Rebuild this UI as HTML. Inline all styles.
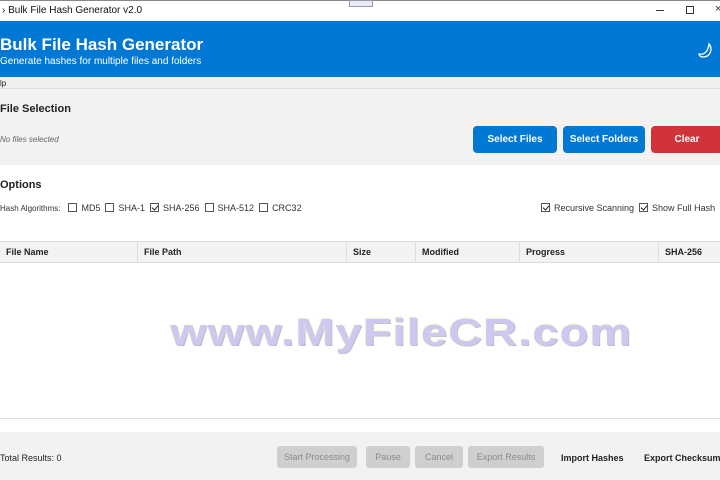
<!DOCTYPE html>
<html><head><style>
*{margin:0;padding:0;box-sizing:border-box}
body{width:720px;height:480px;overflow:hidden;position:relative;background:#fff;font-family:"Liberation Sans","DejaVu Sans",sans-serif;color:#222}
.a{position:absolute;white-space:nowrap}
.btn{position:absolute;border-radius:4px;color:#fff;font-size:10px;font-weight:bold;display:flex;align-items:center;justify-content:center}
.fb{position:absolute;top:446px;height:22px;border-radius:3px;background:#cfcfcf;color:#8a8a8a;font-size:9px;display:flex;align-items:center;justify-content:center;white-space:nowrap}
.cb{display:inline-block;width:9px;height:9px;border:1px solid #555;vertical-align:-1px;margin-right:4px;position:relative;background:#fff}
.cb.k::after{content:"";position:absolute;left:2px;top:0px;width:3px;height:5px;border:solid #222;border-width:0 1.3px 1.3px 0;transform:rotate(40deg)}
.th{position:absolute;top:241px;height:22px;font-size:9px;font-weight:bold;display:flex;align-items:center;padding-left:6px;border-right:1px solid #ddd}
</style></head><body>
<div class="a" style="left:0;top:0;width:720px;height:21px;background:#fff;border-top:1px solid #888"></div>
<div class="a" style="left:349px;top:0;width:24px;height:7px;background:#e8eaf6;border:1px solid #99a"></div>
<div class="a" style="left:2px;top:5px;font-size:10px;color:#111">› Bulk File Hash Generator v2.0</div>
<div class="a" style="left:656px;top:10px;width:8px;height:1px;background:#333"></div>
<div class="a" style="left:686px;top:6px;width:8px;height:8px;border:1px solid #333"></div>
<div class="a" style="left:715px;top:3px;font-size:11px;color:#333">×</div>
<div class="a" style="left:0;top:21px;width:720px;height:56px;background:#0078d4"></div>
<div class="a" style="left:0;top:35px;font-size:17px;font-weight:bold;color:#fff">Bulk File Hash Generator</div>
<div class="a" style="left:0;top:56px;font-size:10px;color:#fff">Generate hashes for multiple files and folders</div>
<svg class="a" style="left:697px;top:42px" width="18" height="18" viewBox="0 0 18 18"><path d="M12 2 C16 6 14 15 6 15 C3 15 2 13 2 12 C6 13 11 11 12 2Z" fill="none" stroke="#fff" stroke-width="1.3"/></svg>
<div class="a" style="left:0;top:77px;width:720px;height:12px;background:#f0f0f0;border-bottom:1px solid #e0e0e0"></div>
<div class="a" style="left:0;top:79px;font-size:8px">lp</div>
<div class="a" style="left:0;top:89px;width:720px;height:76px;background:#f3f2f1"></div>
<div class="a" style="left:0;top:103px;font-size:11px;font-weight:bold">File Selection</div>
<div class="a" style="left:0;top:135px;font-size:8px;font-style:italic;color:#666">No files selected</div>
<div class="btn" style="left:473px;top:126px;width:84px;height:27px;background:#0078d4">Select Files</div>
<div class="btn" style="left:563px;top:126px;width:82px;height:27px;background:#0078d4">Select Folders</div>
<div class="btn" style="left:651px;top:126px;width:72px;height:27px;background:#d13438">Clear</div>
<div class="a" style="left:0;top:179px;font-size:11px;font-weight:bold">Options</div>
<div class="a" style="left:0;top:203px;font-size:9px;color:#333"><span style="font-size:8px;margin-right:8px">Hash Algorithms:</span><span class="cb"></span>MD5&nbsp;&nbsp;<span class="cb"></span>SHA-1&nbsp;&nbsp;<span class="cb k"></span>SHA-256&nbsp;&nbsp;<span class="cb"></span>SHA-512&nbsp;&nbsp;<span class="cb"></span>CRC32</div>
<div class="a" style="left:541px;top:203px;font-size:9px;color:#333"><span class="cb k"></span>Recursive Scanning&nbsp;&nbsp;<span class="cb k"></span>Show Full Hash</div>
<div class="a" style="left:0;top:241px;width:720px;height:22px;background:#f3f2f1;border-top:1px solid #ddd;border-bottom:1px solid #ddd"></div>
<div class="th" style="left:0;width:138px">File Name</div>
<div class="th" style="left:138px;width:209px">File Path</div>
<div class="th" style="left:347px;width:69px">Size</div>
<div class="th" style="left:416px;width:104px">Modified</div>
<div class="th" style="left:520px;width:139px">Progress</div>
<div class="th" style="left:659px;width:61px;border:none">SHA-256</div>
<div class="a" style="left:170px;top:312px;font-size:38px;font-weight:bold;color:#ccc8f0;letter-spacing:1px;transform:scaleX(1.23);transform-origin:left top;text-shadow:0 0 3px #fff0c0,1px 1px 0 #a9a3e0">www.MyFileCR.com</div>
<div class="a" style="left:0;top:418px;width:720px;height:1px;background:#ddd"></div>
<div class="a" style="left:0;top:432px;width:720px;height:48px;background:#f3f2f1"></div>
<div class="a" style="left:0;top:453px;font-size:9px">Total Results: 0</div>
<div class="fb" style="left:277px;width:80px">Start Processing</div>
<div class="fb" style="left:366px;width:44px">Pause</div>
<div class="fb" style="left:415px;width:48px">Cancel</div>
<div class="fb" style="left:468px;width:76px">Export Results</div>
<div class="a" style="left:561px;top:453px;font-size:9px;font-weight:bold">Import Hashes</div>
<div class="a" style="left:644px;top:453px;font-size:9px;font-weight:bold">Export Checksum</div>
</body></html>
